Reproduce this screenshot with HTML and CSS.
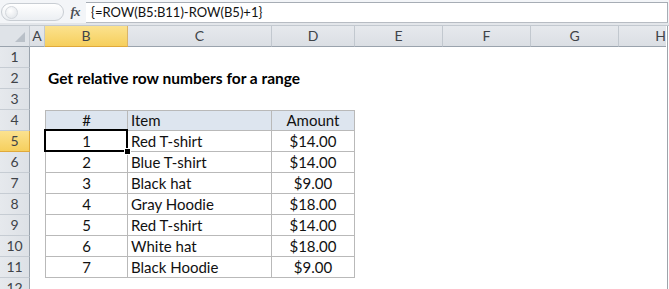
FILE: index.html
```html
<!DOCTYPE html>
<html>
<head>
<meta charset="utf-8">
<link rel="stylesheet" href="styles.css">
</head>
<body>
<div class="app">
  <div class="fbar">
    <div class="namebox"><span class="knob"></span></div>
    <div class="fx">fx</div>
    <div class="finput">{=ROW(B5:B11)-ROW(B5)+1}</div>
  </div>
  <div class="gap"></div>
  <div class="sheet">
    <div class="corner"><span class="tri"></span></div>
    <div class="ch">A</div><div class="ch sel">B</div><div class="ch">C</div><div class="ch">D</div><div class="ch">E</div><div class="ch">F</div><div class="ch">G</div><div class="ch last">H</div>

    <div class="rh">1</div><div></div><div></div><div></div><div></div><div></div><div></div><div></div><div></div>

    <div class="rh">2</div><div></div><div class="title">Get relative row numbers for a range</div><div></div><div></div><div></div><div></div><div></div><div></div>

    <div class="rh">3</div><div></div><div></div><div></div><div></div><div></div><div></div><div></div><div></div>

    <div class="rh">4</div><div></div><div class="t hd first ctr">#</div><div class="t hd">Item</div><div class="t hd ctr">Amount</div><div></div><div></div><div></div><div></div>

    <div class="rh sel">5</div><div></div><div class="t first ctr active">1</div><div class="t">Red T-shirt</div><div class="t ctr">$14.00</div><div></div><div></div><div></div><div></div>

    <div class="rh">6</div><div></div><div class="t first ctr">2</div><div class="t">Blue T-shirt</div><div class="t ctr">$14.00</div><div></div><div></div><div></div><div></div>

    <div class="rh">7</div><div></div><div class="t first ctr">3</div><div class="t">Black hat</div><div class="t ctr">$9.00</div><div></div><div></div><div></div><div></div>

    <div class="rh">8</div><div></div><div class="t first ctr">4</div><div class="t">Gray Hoodie</div><div class="t ctr">$18.00</div><div></div><div></div><div></div><div></div>

    <div class="rh">9</div><div></div><div class="t first ctr">5</div><div class="t">Red T-shirt</div><div class="t ctr">$14.00</div><div></div><div></div><div></div><div></div>

    <div class="rh">10</div><div></div><div class="t first ctr">6</div><div class="t">White hat</div><div class="t ctr">$18.00</div><div></div><div></div><div></div><div></div>

    <div class="rh">11</div><div></div><div class="t first ctr">7</div><div class="t">Black Hoodie</div><div class="t ctr">$9.00</div><div></div><div></div><div></div><div></div>

    <div class="rh">12</div><div></div><div></div><div></div><div></div><div></div><div></div><div></div><div></div>
  </div>
</div>
</body>
</html>
```
FILE: styles.css
```css
html, body {
  margin: 0;
  padding: 0;
  background: #ffffff;
}
body {
  width: 669px;
  height: 289px;
  overflow: hidden;
  font-family: "Lato", "Open Sans", sans-serif;
  color: #000;
}
.app {
  display: flex;
  flex-direction: column;
  width: 669px;
}
.fbar {
  height: 23px;
  display: flex;
  align-items: center;
  background: #f3f5f8;
  box-sizing: border-box;
  padding-top: 1px;
}
.namebox {
  width: 63px;
  height: 18px;
  box-sizing: border-box;
  margin-left: 1px;
  border: 1px solid #c8cdd3;
  border-radius: 9px;
  background: linear-gradient(#ffffff, #eceff3);
  display: flex;
  align-items: center;
  padding-left: 3px;
}
.knob {
  width: 11px;
  height: 11px;
  border-radius: 50%;
  background: radial-gradient(circle at 40% 35%, #ffffff, #dde1e6);
  border: 1px solid #d3d7dc;
}
.fx {
  width: 22px;
  text-align: center;
  font-family: "Liberation Serif", serif;
  font-style: italic;
  font-weight: bold;
  font-size: 13px;
  color: #4b4f55;
  letter-spacing: -1px;
}
.finput {
  flex: 1;
  height: 21px;
  box-sizing: border-box;
  margin-right: 1px;
  border-top: 1px solid #a7adb5;
  border-bottom: 1px solid #b7bcc3;
  border-right: 1px solid #a7adb5;
  background: #fff;
  font-size: 13px;
  line-height: 19px;
  padding-left: 5px;
  color: #111;
}
.gap {
  height: 2px;
  background: #e3e6ea;
  border-bottom: 1px solid #c3c9d0;
}
.sheet {
  display: grid;
  width: 668px;
  box-sizing: border-box;
  border-right: 1px solid #9ea4ab;
  grid-template-columns: 30px 15px 83px 144px 83px 88px 88px 88px 47px;
  grid-auto-rows: 21px;
  font-size: 15px;
}
.sheet > div {
  box-sizing: border-box;
  min-width: 0;
  white-space: nowrap;
}
.corner {
  background: #dfe3e8;
  border-right: 1px solid #c2c8cf;
  border-bottom: 1px solid #9aa3ad;
  display: flex;
  justify-content: flex-end;
  align-items: flex-end;
  padding: 0 4px 4px 0;
}
.tri {
  width: 0;
  height: 0;
  border-left: 10px solid transparent;
  border-bottom: 10px solid #b9c0c8;
}
.ch {
  background: linear-gradient(#e6e9ed, #dbdfe4);
  border-right: 1px solid #c2c8cf;
  border-bottom: 1px solid #9aa3ad;
  text-align: center;
  line-height: 20px;
  font-size: 14px;
  color: #3f4348;
}
.ch.last {
  border-right: none;
  text-align: right;
  overflow: hidden;
}
.ch.sel {
  background: linear-gradient(#fbe28f, #f6cf5d);
  border-bottom-color: #e0a93b;
  border-right-color: #d9b46a;
}
.rh {
  background: linear-gradient(90deg, #e6e9ed, #dde1e6);
  border-right: 1px solid #9aa3ad;
  border-bottom: 1px solid #c6ccd3;
  text-align: center;
  line-height: 20px;
  font-size: 14px;
  color: #3f4348;
}
.rh.sel {
  background: linear-gradient(#fbe28f, #f6cf5d);
  border-bottom-color: #e0a93b;
  border-right-color: #e0a93b;
}
.title {
  font-weight: bold;
  font-size: 15.5px;
  line-height: 21px;
  padding-left: 3px;
  overflow: visible;
}
.t {
  border-right: 1px solid #b9b9b9;
  border-bottom: 1px solid #b9b9b9;
  line-height: 20px;
  padding-left: 3px;
  font-size: 15px;
  color: #111;
}
.t.first {
  border-left: 1px solid #b9b9b9;
}
.t.hd {
  border-top: 1px solid #b9b9b9;
  background: #dde5ef;
  line-height: 19px;
}
.ctr {
  text-align: center;
  padding-left: 0;
}
.active {
  position: relative;
}
.active::after {
  content: "";
  position: absolute;
  left: -2px;
  top: -2px;
  right: -1px;
  bottom: -1px;
  border: 2px solid #000;
}
.active::before {
  content: "";
  position: absolute;
  right: -4px;
  bottom: -4px;
  width: 5px;
  height: 5px;
  background: #000;
  border: 1px solid #fff;
  z-index: 2;
}
```
